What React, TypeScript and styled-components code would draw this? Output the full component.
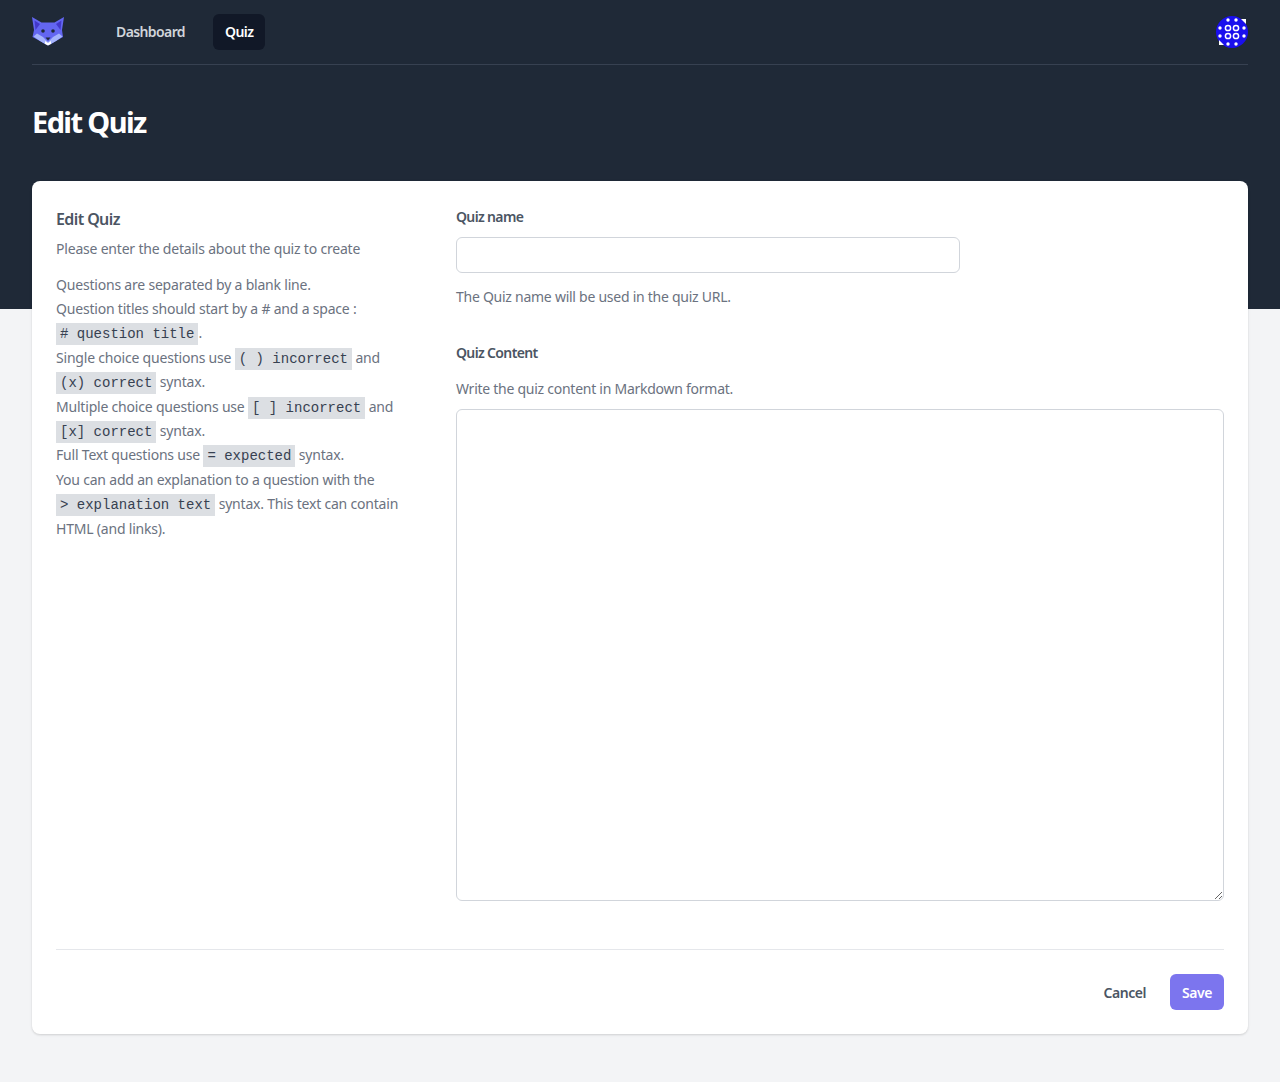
import React from "react";
import styled, { createGlobalStyle } from "styled-components";

const GlobalStyle = createGlobalStyle`
  html, body {
    margin: 0;
    padding: 0;
    background: #f3f4f6;
    font-family: "Noto Sans", "Liberation Sans", sans-serif;
    font-size: 14px;
    line-height: 24px;
  }
  * { box-sizing: border-box; }
`;

const Hero = styled.div`
  background: #1f2937;
  height: 309px;
  padding: 0 32px;
`;

const Nav = styled.nav`
  display: flex;
  align-items: center;
  height: 65px;
  border-bottom: 1px solid #374151;
`;

const LogoWrap = styled.div`
  display: flex;
  width: 32px;
  margin-right: 40px;
`;

const Links = styled.div`
  display: flex;
  gap: 16px;
  flex: 1;
`;

const NavLink = styled.a<{ $active?: boolean }>`
  display: flex;
  align-items: center;
  height: 36px;
  padding: 0 12px;
  border-radius: 6px;
  font-size: 14px;
  font-weight: 600;
  letter-spacing: -0.6px;
  color: ${({ $active }) => ($active ? "#ffffff" : "#d1d5db")};
  background: ${({ $active }) => ($active ? "#111827" : "transparent")};
`;

const Title = styled.h1`
  margin: 0;
  padding: 39px 0 41px;
  font-size: 29px;
  line-height: 36px;
  font-weight: 700;
  letter-spacing: -1.6px;
  color: #ffffff;
`;

const Main = styled.main`
  margin-top: -128px;
  padding: 0 32px 48px;
`;

const Card = styled.form`
  background: #ffffff;
  border-radius: 8px;
  padding: 24px;
  box-shadow: 0 1px 3px rgba(0, 0, 0, 0.1), 0 1px 2px rgba(0, 0, 0, 0.06);
`;

const Columns = styled.div`
  display: grid;
  grid-template-columns: 344px 768px;
  gap: 56px;
`;

const Side = styled.div`
  color: #6b7280;
  letter-spacing: -0.2px;
`;

const SideTitle = styled.h3`
  margin: 0;
  font-size: 16px;
  line-height: 28px;
  font-weight: 600;
  letter-spacing: -0.6px;
  color: #4b5563;
`;

const SideIntro = styled.p`
  margin: 4px 0 11px;
  line-height: 24.5px;
`;

const SideHelp = styled.div`
  margin: 0;
  line-height: 24.4px;
`;

const Code = styled.code`
  font-family: "Liberation Mono", monospace;
  font-size: 14px;
  letter-spacing: 0;
  line-height: 20px;
  white-space: nowrap;
  padding: 3px 4px;
  background: #dcdfe3;
  color: #374151;
`;

const Fields = styled.div`
  display: flex;
  flex-direction: column;
`;

const Label = styled.label`
  display: block;
  font-weight: 600;
  letter-spacing: -0.65px;
  color: #4b5563;
`;

const TextInput = styled.input`
  display: block;
  width: 504px;
  height: 36px;
  margin-top: 8px;
  padding: 0 12px;
  border: 1px solid #d1d5db;
  border-radius: 6px;
  background: #ffffff;
`;

const Help = styled.p<{ $gap: number }>`
  margin: 12px 0 ${({ $gap }) => $gap}px;
  color: #6b7280;
  letter-spacing: -0.26px;
`;

const TextArea = styled.textarea`
  display: block;
  width: 768px;
  height: 492px;
  border: 1px solid #d1d5db;
  border-radius: 6px;
  background: #ffffff;
`;

const Footer = styled.div`
  display: flex;
  justify-content: flex-end;
  gap: 12px;
  margin-top: 48px;
  padding-top: 24px;
  border-top: 1px solid #e5e7eb;
`;

const Button = styled.button<{ $primary?: boolean }>`
  height: 36px;
  padding: 0 12px;
  border: 0;
  border-radius: 6px;
  font-family: inherit;
  font-size: 14px;
  font-weight: 600;
  letter-spacing: -0.45px;
  color: ${({ $primary }) => ($primary ? "#ffffff" : "#4b5563")};
  background: ${({ $primary }) => ($primary ? "#7c75ee" : "transparent")};
`;

const Logo = () => (
  <svg width="32" height="30" viewBox="0 0 32 30">
    <path d="M0 0L9.500 5.500H22.500L32 0L30 13L31 20L24 24L16 28.500L8 24L0.500 20L2 13Z" fill="#6366f1" />
    <path d="M2.500 3.500L8 7L3.500 13Z" fill="#4338ca" />
    <path d="M29.500 3.500L24 7L28.500 13Z" fill="#4338ca" />
    <path d="M1.500 19.500L5 16.500L11 20L16 25L21 20L27 16.500L30.500 19.500L24 24L19 27H13L8 24Z" fill="#a5b4fc" />
    <path d="M13 24L16 26L19 24L19 27L16 28.500L13 27Z" fill="#ffffff" />
    <circle cx="11" cy="14" r="1.800" fill="#1f2937" />
    <circle cx="21" cy="14" r="1.800" fill="#1f2937" />
    <path d="M13.500 20.500H18.500L16 23.500Z" fill="#1f2937" />
  </svg>
);

const dots = [
  [12, 4], [20, 4], [4, 12], [28, 12], [4, 20], [28, 20], [12, 28], [20, 28],
];
const rings = [[12, 12], [20, 12], [12, 20], [20, 20]];

const Avatar = () => (
  <svg width="32" height="32" viewBox="0 0 32 32">
    <circle cx="16" cy="16" r="16" fill="#1a0fee" />
    <path d="M25 3L30 3L30 8Z" fill="#ffffff" />
    <path d="M3 24L8 29L3 29Z" fill="#ffffff" />
    {dots.map(([x, y]) => (
      <circle key={`${x}-${y}`} cx={x} cy={y} r="1.700" fill="#ffffff" />
    ))}
    {rings.map(([x, y]) => (
      <circle key={`${x}-${y}`} cx={x} cy={y} r="2.600" fill="none" stroke="#ffffff" strokeWidth="1.500" />
    ))}
  </svg>
);

export default function App() {
  return (
    <>
      <GlobalStyle />
      <Hero>
        <Nav>
          <LogoWrap>
            <Logo />
          </LogoWrap>
          <Links>
            <NavLink>Dashboard</NavLink>
            <NavLink $active>Quiz</NavLink>
          </Links>
          <Avatar />
        </Nav>
        <Title>Edit Quiz</Title>
      </Hero>
      <Main>
        <Card>
          <Columns>
            <Side>
              <SideTitle>Edit Quiz</SideTitle>
              <SideIntro>Please enter the details about the quiz to create</SideIntro>
              <SideHelp>
                Questions are separated by a blank line.
                <br />
                Question titles should start by a # and a space : <Code># question title</Code>.
                <br />
                Single choice questions use <Code>( ) incorrect</Code> and <Code>(x) correct</Code> syntax.
                <br />
                Multiple choice questions use <Code>[ ] incorrect</Code> and <Code>[x] correct</Code> syntax.
                <br />
                Full Text questions use <Code>= expected</Code> syntax.
                <br />
                You can add an explanation to a question with the <Code>&gt; explanation text</Code> syntax. This
                text can contain HTML (and links).
              </SideHelp>
            </Side>
            <Fields>
              <Label>Quiz name</Label>
              <TextInput type="text" />
              <Help $gap={32}>The Quiz name will be used in the quiz URL.</Help>
              <Label>Quiz Content</Label>
              <Help $gap={8}>Write the quiz content in Markdown format.</Help>
              <TextArea />
            </Fields>
          </Columns>
          <Footer>
            <Button type="button">Cancel</Button>
            <Button type="button" $primary>
              Save
            </Button>
          </Footer>
        </Card>
      </Main>
    </>
  );
}
